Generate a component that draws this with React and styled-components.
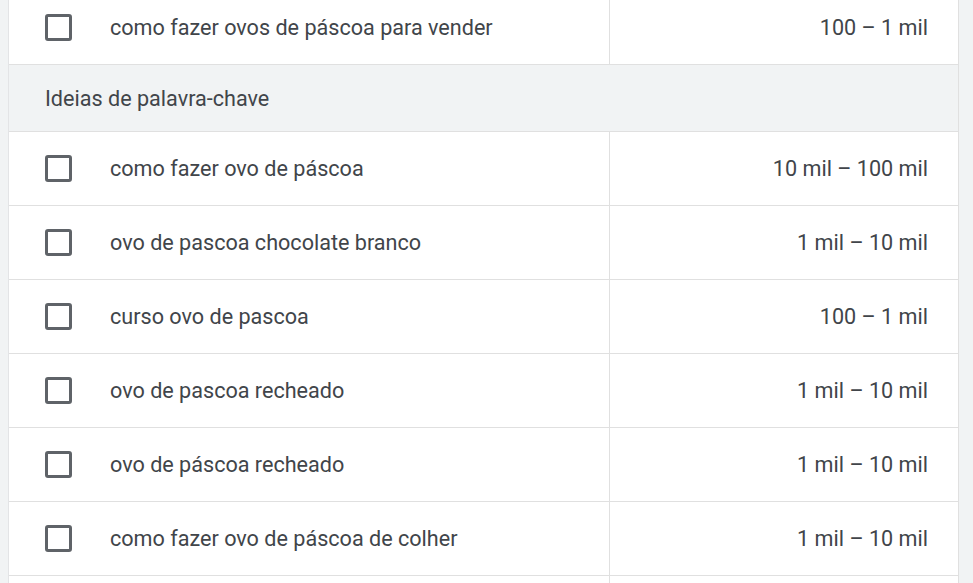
import styled, { createGlobalStyle } from 'styled-components';

const GlobalStyle = createGlobalStyle`
  html, body {
    margin: 0;
    padding: 0;
    background: #f1f3f4;
    font-family: Roboto, "Liberation Sans", Arial, sans-serif;
  }
`;

const Page = styled.div`
  width: 973px;
  height: 583px;
  overflow: hidden;
  background: #f1f3f4;
  padding: 0 14px 0 8px;
  box-sizing: border-box;
`;

const Table = styled.div`
  margin-top: -9px;
  border-left: 1px solid #e3e4e6;
  border-right: 1px solid #e0e0e0;
`;

const Row = styled.div`
  display: grid;
  grid-template-columns: 601px 1fr;
  height: 74px;
  box-sizing: border-box;
  background: #fff;
  border-bottom: 1px solid #e0e0e0;
`;

const KeywordCell = styled.div`
  display: flex;
  align-items: center;
  padding-left: 36px;
  border-right: 1px solid #e0e0e0;
  font-size: 21.6px;
  color: #41454a;
`;

const RangeCell = styled.div`
  display: flex;
  align-items: center;
  justify-content: flex-end;
  padding-right: 30px;
  font-size: 21.6px;
  color: #41454a;
`;

const Checkbox = styled.span`
  width: 27px;
  height: 27px;
  box-sizing: border-box;
  border: 3px solid #5f6368;
  border-radius: 3px;
  margin-right: 38px;
  flex-shrink: 0;
`;

const SectionHeader = styled.div`
  height: 67px;
  box-sizing: border-box;
  display: flex;
  align-items: center;
  padding-left: 36px;
  background: #f1f3f4;
  border-bottom: 1px solid #e0e0e0;
  font-size: 21.6px;
  color: #41454a;
`;

const KeywordRow = ({ keyword, range }) => (
  <Row>
    <KeywordCell>
      {keyword && <Checkbox />}
      {keyword}
    </KeywordCell>
    <RangeCell>{range}</RangeCell>
  </Row>
);

const ideas = [
  ['como fazer ovo de páscoa', '10 mil – 100 mil'],
  ['ovo de pascoa chocolate branco', '1 mil – 10 mil'],
  ['curso ovo de pascoa', '100 – 1 mil'],
  ['ovo de pascoa recheado', '1 mil – 10 mil'],
  ['ovo de páscoa recheado', '1 mil – 10 mil'],
  ['como fazer ovo de páscoa de colher', '1 mil – 10 mil'],
];

export default function App() {
  return (
    <Page>
      <GlobalStyle />
      <Table>
        <KeywordRow keyword="como fazer ovos de páscoa para vender" range="100 – 1 mil" />
        <SectionHeader>Ideias de palavra-chave</SectionHeader>
        {ideas.map(([k, r]) => (
          <KeywordRow key={k} keyword={k} range={r} />
        ))}
        {/* next row, scrolled just below the fold */}
        <KeywordRow keyword="" range="" />
      </Table>
    </Page>
  );
}
